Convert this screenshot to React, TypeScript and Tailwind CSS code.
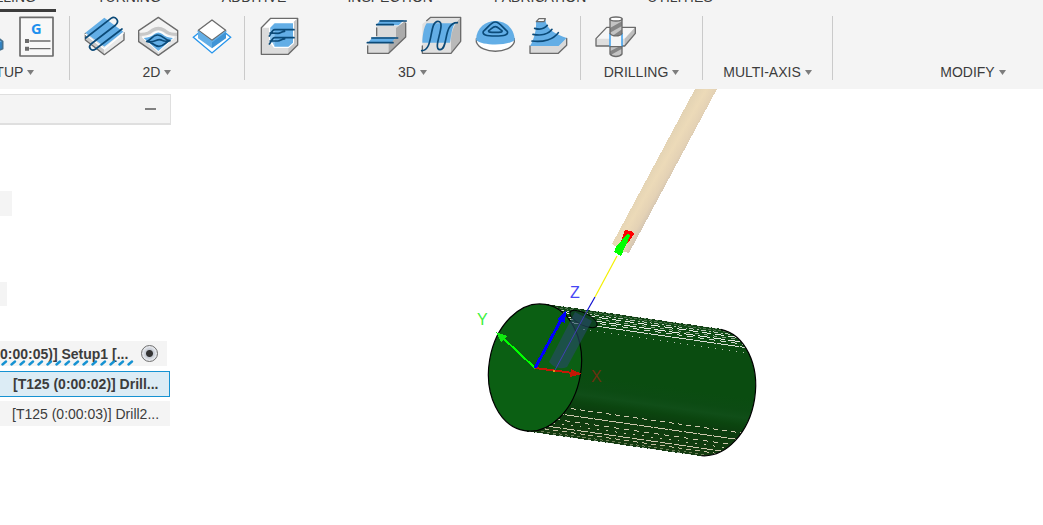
import type { ReactNode } from "react";
import clsx from "clsx";

const NAVY = "#0b4a78";
const BLUE = "#63aee6";
const EDGE = "#6b6b6b";

const tabs = [
  "MILLING",
  "TURNING",
  "ADDITIVE",
  "INSPECTION",
  "FABRICATION",
  "UTILITIES",
];

function Icon({ label, children }: { label: string; children: ReactNode }) {
  return (
    <button type="button" aria-label={label} className="size-10 shrink-0">
      <svg
        viewBox="0 0 120 120"
        className="size-10 overflow-visible"
        fill="none"
        strokeWidth="5"
        strokeLinejoin="round"
        strokeLinecap="round"
      >
        {children}
      </svg>
    </button>
  );
}

function NewSetupIcon() {
  return (
    <Icon label="New setup">
      <path d="M60 60 L100 60 L122 76 L122 98 L98 108 L60 108Z" fill={BLUE} />
      <path d="M98 84 L122 76 L122 98 L98 108Z" fill="#3284c4" />
      <path d="M60 60 L100 60 L122 76 L122 98 L98 108" stroke="#46718f" />
    </Icon>
  );
}

function PostIcon() {
  return (
    <Icon label="Post process">
      <rect x="12" y="4" width="99" height="116" fill="#f8f8f8" stroke={EDGE} />
      <text
        x="61"
        y="54"
        textAnchor="middle"
        fontFamily="'Noto Sans', 'Open Sans', sans-serif"
        fontWeight="700"
        fontSize="44"
        fill="#1e90ee"
      >
        G
      </text>
      <path d="M27 69h12v12h-12z M27 92h12v12h-12z" fill={EDGE} />
      <path d="M42 75h60 M42 98h60" stroke={EDGE} strokeWidth="4" />
    </Icon>
  );
}

function FaceIcon() {
  return (
    <Icon label="Face">
      <path d="M7 50 L64 96 L64 118 L7 72Z" fill="#c9c9c9" />
      <path d="M123 48 L64 96 L64 118 L123 72Z" fill="#e9e9e9" />
      <path d="M7 52 L7 72 L64 116 L123 72 L123 50" stroke={EDGE} strokeWidth="4" />
      <path d="M64 5 L121 47 L64 92 L7 50Z" fill={BLUE} />
      <path d="M7 55 L64 99 L121 51" stroke="#fff" strokeWidth="4" />
      <path
        d="M8 66 L84 7 C96 -1 112 14 98 27 L24 84 C14 93 24 108 38 99 L117 39"
        stroke={NAVY}
      />
    </Icon>
  );
}

function AdaptiveIcon() {
  return (
    <Icon label="2D adaptive clearing">
      <path d="M64 4 L122 44 L122 77 L64 118 L5 77 L5 44Z" fill="#f4f4f4" />
      <path d="M5 46 L18 66 L64 106 L64 118 L5 77Z" fill="#d8d8d8" />
      <path d="M122 46 L110 66 L64 106 L64 118 L122 77Z" fill="#e6e6e6" />
      <path d="M7 50 C24 52 36 46 44 38 Q64 26 84 38 C92 46 104 52 120 50 L120 60 Q92 60 80 48 Q64 38 48 48 Q36 60 7 60Z" fill="#c8c8c8" />
      <path d="M14 64 Q38 62 50 50 Q64 40 78 50 Q90 62 114 64 L64 109Z" fill="#fff" />
      <path d="M20 66 Q42 64 52 54 Q64 45 76 54 Q86 64 108 66 L64 105Z" fill={BLUE} />
      <path
        d="M29 76 C40 76 45 57 62 57 C78 57 84 74 99 74 C86 76 82 91 66 91 C50 91 44 76 29 76Z M29 76 C54 84 60 64 75 73 C84 78 92 76 99 74"
        stroke={NAVY}
      />
      <path d="M64 4 L122 44 L122 77 L64 118 L5 77 L5 44Z" stroke={EDGE} strokeWidth="4" />
    </Icon>
  );
}

function ContourIcon() {
  return (
    <Icon label="2D contour">
      <path d="M63 18 L119 64 L63 111 L7 64Z" fill="#fff" stroke="#2695ec" strokeWidth="4" strokeLinejoin="miter" />
      <path d="M21 42 L63 73 L63 97 L21 67Z" fill={BLUE} />
      <path d="M105 42 L63 73 L63 97 L105 67Z" fill="#3f94d6" />
      <path d="M63 12 L104 43 L63 73 L22 43Z" fill="#fff" stroke={EDGE} strokeWidth="4" />
      <path d="M21 46 L63 77 L105 46" stroke={BLUE} strokeWidth="4" />
    </Icon>
  );
}

function PocketIcon() {
  return (
    <Icon label="Adaptive clearing">
      <path d="M10 35 L38 7 L119 7 L119 87 L91 115 L10 115Z" fill="#dcdcdc" />
      <path d="M10 35 L38 7 L119 7 L105 21 L48 21 L34 35Z" fill="#fff" />
      <path d="M119 7 L119 87 L91 115 L91 94 L107 80 L107 18Z" fill="#c6c6c6" />
      <path d="M33 34 L50 19 L108 19 L108 82 L92 96 L48 96 L33 76Z" fill="#fff" />
      <path d="M36 36 L50 22 L105 22 L105 80 L91 92 L50 92 L45 80 L36 76Z" fill={BLUE} />
      <path d="M36 36 L50 44 L50 92 L45 80 L36 76Z" fill="#8bc4ee" />
      <path
        d="M108 41 L50 41 C42 41 40 53 34 60 M36 51 L60 52 C68 52 70 46 80 46 M108 65 L50 65 C42 65 40 78 34 84 M36 75 L60 75 C68 75 70 69 80 69"
        stroke={NAVY}
      />
      <path d="M10 35 L38 7 L119 7 L119 87 L91 115 L10 115Z" stroke={EDGE} strokeWidth="4" />
    </Icon>
  );
}

function HorizontalIcon() {
  return (
    <Icon label="Horizontal">
      <path d="M5 85 L5 112 L68 112 L119 63 L119 14 L98 30 L32 30 L32 62 L22 68Z" fill="#dadada" />
      <path d="M119 14 L119 63 L68 112 L68 84 L90 66 L90 36Z" fill="#ababab" />
      <path d="M32 36 L32 59 M5 90 L5 112 L68 112 L119 63 L119 22" stroke={EDGE} strokeWidth="4" />
      <path d="M44 12 L114 12 L98 28 L30 28Z M20 64 L90 64 L76 80 L6 80Z" fill={BLUE} />
      <path
        d="M42 15 L121 15 M32 26 L82 26 M17 66 L95 66 M4 80 L81 80"
        stroke={NAVY}
      />
    </Icon>
  );
}

function ParallelIcon() {
  return (
    <Icon label="Parallel">
      <path d="M7 25 L32 4 L122 4 L98 26 L93 112 L7 112Z" fill="#e0e0e0" />
      <path d="M122 4 L122 76 L93 112 L93 70 C94 45 102 24 122 4Z" fill="#b9b9b9" />
      <path d="M20 22 L106 22 C96 32 94 55 90 80 L7 80 C7 60 12 32 20 22Z" fill={BLUE} />
      <path d="M20 14 L32 4 L122 4 L122 76 L93 112 L7 112 L7 90" stroke={EDGE} strokeWidth="4" />
      <path
        d="M5 104 C42 104 26 16 54 16 C82 16 34 101 60 101 C86 101 68 20 112 20"
        stroke={NAVY}
      />
    </Icon>
  );
}

function ScallopIcon() {
  return (
    <Icon label="Scallop">
      <path d="M7 68 L7 78 C20 115 108 115 121 78 L121 68Z" fill="#fff" stroke={EDGE} strokeWidth="4" />
      <path d="M6 72 C8 -4 120 -4 122 72 C104 90 24 90 6 72Z" fill={BLUE} />
      <path
        d="M64 18 C76 18 84 32 100 46 C104 56 92 60 64 60 C36 60 24 56 28 46 C44 32 52 18 64 18Z M64 32 C72 32 76 40 84 44 C86 49 78 49 64 49 C50 49 42 49 44 44 C52 40 56 32 64 32Z"
        stroke={NAVY}
      />
    </Icon>
  );
}

function RampIcon() {
  return (
    <Icon label="Ramp">
      <path d="M6 90 L92 90 L116 67 L116 88 L91 112 L6 112Z" fill="#d9d9d9" />
      <path d="M6 90 L6 112 L91 112 L116 88 L116 67" stroke={EDGE} strokeWidth="4" />
      <path d="M24 14 L52 10 C54 40 82 55 116 66 L92 90 L6 90 C18 70 26 42 24 14Z" fill={BLUE} />
      <path d="M25 17 L33 8 L52 8 L48 17Z" fill="#fff" stroke={EDGE} strokeWidth="4" />
      <path
        d="M20 37 C36 42 50 38 58 28 M15 55 C40 60 62 54 72 40 M12 75 C45 80 78 70 91 50"
        stroke={NAVY}
      />
    </Icon>
  );
}

function DrillIcon() {
  return (
    <Icon label="Drill">
      <path d="M6 68 L38 34 L124 34 L124 52 L92 90 L6 90Z" fill="#dedede" />
      <path d="M6 68 L38 34 L124 34 L92 68Z" fill="#f6f6f6" />
      <path d="M124 34 L124 52 L92 90 L92 68Z" fill="#bebebe" />
      <path d="M6 68 L38 34 L124 34 L124 52 L92 90 L6 90Z" stroke={EDGE} strokeWidth="4" />
      <path d="M47 58 H84 V92 H47Z" fill="#f4f4f4" />
      <path d="M48 52 V92 M84 52 V92" stroke="#2695ec" strokeWidth="4" />
      <path d="M48 8 V52 C54 62 78 62 84 52 V8Z M48 92 V114 C56 124 76 124 84 114 V92Z" fill="#c4c4c4" />
      <path d="M48 36 L84 16 L84 30 L48 50Z M56 59 L84 40 L84 52 L72 59Z M48 106 L74 92 L84 92 L84 98 L50 117Z" fill="#858585" />
      <path d="M48 8 V52 C54 62 78 62 84 52 V8 M48 92 V114 C56 124 76 124 84 114 V92Z" stroke={EDGE} strokeWidth="4" />
      <ellipse cx="66" cy="9" rx="18" ry="6" fill="#fff" stroke={EDGE} strokeWidth="4" />
    </Icon>
  );
}

interface GroupProps {
  label: string;
  className?: string;
  alignEnd?: boolean;
  last?: boolean;
  children?: ReactNode;
}

function ToolGroup({ label, className, alignEnd, last, children }: GroupProps) {
  return (
    <section
      className={clsx(
        "flex h-16 shrink-0 flex-col items-center justify-between px-[13px]",
        !last && "border-r border-[#cacaca]",
        className
      )}
    >
      <div className={clsx("flex h-10 gap-3.5", alignEnd ? "self-end" : "self-start")}>
        {children}
      </div>
      <button
        type="button"
        className="flex items-center gap-1 text-sm leading-4 whitespace-nowrap text-[#3c3c3c]"
      >
        {label}
        <svg viewBox="0 0 7 5" className="h-[5px] w-[7px]">
          <path d="M0 0h7L3.5 5z" fill="#7d7d7d" />
        </svg>
      </button>
    </section>
  );
}

function Ribbon() {
  return (
    <header className="h-[89px] overflow-hidden bg-[#f4f4f4]">
      <nav className="-ml-10 flex h-3 items-end gap-[21px] overflow-hidden">
        {tabs.map((tab, i) => (
          <button
            key={tab}
            type="button"
            className={clsx(
              "shrink-0 border-b-3 px-5 pb-[5px] text-sm leading-[14px] text-[#3c3c3c]",
              i === 0 ? "border-[#3c3c3c]" : "border-transparent"
            )}
          >
            {tab}
          </button>
        ))}
      </nav>
      <div className="mt-1 -ml-[58px] flex">
        <ToolGroup label="SETUP" className="w-32" alignEnd>
          <NewSetupIcon />
          <PostIcon />
        </ToolGroup>
        <ToolGroup label="2D" className="w-[175px]">
          <FaceIcon />
          <AdaptiveIcon />
          <ContourIcon />
        </ToolGroup>
        <ToolGroup label="3D" className="w-[336px]">
          <PocketIcon />
          <span className="w-10" />
          <HorizontalIcon />
          <ParallelIcon />
          <ScallopIcon />
          <RampIcon />
        </ToolGroup>
        <ToolGroup label="DRILLING" className="w-[122px]">
          <DrillIcon />
        </ToolGroup>
        <ToolGroup label="MULTI-AXIS" className="w-[130px]" />
        <ToolGroup label="MODIFY" className="w-[280px]" last />
      </div>
    </header>
  );
}

function BrowserPanel() {
  return (
    <aside className="w-[171px] shrink-0 text-sm leading-4 text-[#3c3c3c]">
      <div className="mt-[5px] flex h-[31px] items-center justify-end border-t border-r border-b-2 border-[#dfdfdf] bg-[#f4f4f4] pr-3.5">
        <button type="button" aria-label="Collapse" className="flex h-4 items-center">
          <span className="h-0.5 w-[11px] bg-[#808080]" />
        </button>
      </div>
      <div className="mt-[66px] h-[25px] w-3 bg-[#f4f4f4]" />
      <div className="mt-[66px] h-6 w-[7px] bg-[#f4f4f4]" />

      <div className="mt-[35px] flex h-[25px] w-[167px] items-center justify-between bg-[#f4f4f4] pr-[9px]">
        <label htmlFor="setup1" className="relative font-bold whitespace-nowrap">
          0:00:05)] Setup1 [...
          <svg className="absolute top-3.5 left-0 h-1.5 w-[134px]">
            <defs>
              <pattern id="hatch" width="9" height="6" patternUnits="userSpaceOnUse">
                <path d="M2.5 4.5 L6 1.5" stroke="#1592d2" strokeWidth="2.4" strokeLinecap="round" />
              </pattern>
            </defs>
            <rect width="134" height="6" fill="url(#hatch)" />
          </svg>
        </label>
        <input
          id="setup1"
          type="radio"
          name="setup"
          defaultChecked
          className="size-[17px] appearance-none rounded-full border border-[#6e6e6e] bg-[radial-gradient(circle,#333_3px,#c5cad3_4px,#e8eaee_7px)]"
        />
      </div>
      <div className="mt-[5px] flex h-[26px] w-[170px] items-center border border-l-0 border-[#1592d2] bg-[#dcecf5] pl-[13px] font-bold whitespace-nowrap">
        [T125 (0:00:02)] Drill...
      </div>
      <div className="mt-1 flex h-[25px] w-[170px] items-center bg-[#f4f4f4] pl-3 whitespace-nowrap">
        [T125 (0:00:03)] Drill2...
      </div>
    </aside>
  );
}

// feature edges along the stock, measured from its centre axis
const stockEdges = [
  { offset: -63, dash: "3 2", color: "#51704f" },
  { offset: -61, dash: "5 3 2 2", color: "#b9c5b6" },
  { offset: -59, dash: "9 4", color: "#e8ebe5" },
  { offset: -57, dash: "4 5", color: "#93a991" },
  { offset: -55, dash: "12 3", color: "#e8ebe5" },
  { offset: -53, dash: "6 5", color: "#d0d9cd" },
  { offset: -50, dash: "22 1", color: "#d6ddd3" },
  { offset: -45, dash: "1 6", color: "#b3c0b0" },
  { offset: 36, dash: "5 4", color: "#cdc7ad" },
  { offset: 43, dash: "14 1", color: "#cdc7ad" },
  { offset: 49, dash: "5 5", color: "#cdc7ad" },
  { offset: 53, dash: "2 7", color: "#cdc7ad" },
  { offset: 57, dash: "12 2", color: "#cdc7ad" },
  { offset: 60, dash: "5 4", color: "#c3bd9f" },
  { offset: 63, dash: "3 3", color: "#6d7f58" },
];

const stockPath =
  "M544.7 304.3 L720.7 329.3 A46 64 9.4 0 1 701.3 455.7 L525.3 430.7 A46 64 9.4 0 0 544.7 304.3Z";

function Viewport() {
  return (
    <svg
      viewBox="171 89 872 436"
      width="872"
      height="436"
      className="shrink-0"
      role="img"
      aria-label="Stock and tool preview"
    >
      <defs>
        <linearGradient id="stock" gradientUnits="userSpaceOnUse" x1="632" y1="317" x2="614" y2="443">
          <stop offset="0" stopColor="#124c18" />
          <stop offset="0.15" stopColor="#0a4c10" />
          <stop offset="0.5" stopColor="#0a4c10" />
          <stop offset="0.6" stopColor="#0c4b13" />
          <stop offset="0.66" stopColor="#104e18" />
          <stop offset="0.72" stopColor="#0b450f" />
          <stop offset="0.78" stopColor="#0b3d0e" />
          <stop offset="1" stopColor="#153c10" />
        </linearGradient>
        <linearGradient id="shank" gradientUnits="userSpaceOnUse" x1="652" y1="165" x2="673" y2="177">
          <stop offset="0" stopColor="#e3d3b4" />
          <stop offset="0.4" stopColor="#ecdab8" />
          <stop offset="0.75" stopColor="#e4d2b5" />
          <stop offset="1" stopColor="#d2c4b2" />
        </linearGradient>
        <clipPath id="stockClip">
          <path d={stockPath} />
        </clipPath>
      </defs>

      <g shapeRendering="crispEdges">
        <path d="M695 89 L717 89 L629 253 L624 252 L612 244Z" fill="url(#shank)" />
        <path d="M625 230 L631 231 L634 234 L628 243 L621 242Z" fill="#f00" />
        <path d="M628 233 L630 236 L621 256 L614 252 L616 247Z" fill="#0f0" />
      </g>

      <path d={stockPath} fill="url(#stock)" />
      <g clipPath="url(#stockClip)" shapeRendering="crispEdges">
        {stockEdges.map((e) => (
          <line
            key={e.offset}
            x1="535"
            y1={367.5 + e.offset}
            x2="760"
            y2={399.6 + e.offset}
            stroke={e.color}
            strokeDasharray={e.dash}
          />
        ))}
      </g>
      <path d="M720.7 329.3 A46 64 9.4 0 1 701.3 455.7" fill="none" stroke="#000" strokeWidth="1.2" />
      <path
        d="M544.7 304.3 L720.7 329.3 M701.3 455.7 L525.3 430.7"
        stroke="#143c14"
        strokeDasharray="4 2"
        shapeRendering="crispEdges"
      />
      <ellipse
        cx="535"
        cy="367.5"
        rx="46"
        ry="64"
        transform="rotate(9.4 535 367.5)"
        fill="#0b5f13"
        stroke="#000"
        strokeWidth="1.2"
      />

      <ellipse
        cx="583.5"
        cy="319"
        rx="15"
        ry="6"
        transform="rotate(27 583.5 319)"
        fill="#0d4320"
        stroke="#000"
      />
      <path d="M575 312 L592 321 L567 367 Q557 371 549 362Z" fill="#264a66" fillOpacity="0.65" />
      <path d="M555 370 L587 311" stroke="#4040b4" />
      <path d="M587 311 L595 297" stroke="#1010d0" strokeWidth="1.2" />
      <path d="M595 297 L617 256" stroke="#f4f000" strokeWidth="1.2" />

      <g shapeRendering="crispEdges">
        <path d="M535 368 L573 373" stroke="#c41806" strokeWidth="2" />
        <path d="M571 369 L582 374 L570 377Z" fill="#c41806" />
        <path d="M535 368 L503 338" stroke="#0f0" strokeWidth="2" />
        <path d="M496 332 L507 336 L501 342Z" fill="#10ea10" />
        <path d="M535 368 L561 320" stroke="#00f" strokeWidth="3" />
        <path d="M566 311 L565 323 L557 319Z" fill="#00f" />
        <rect x="553" y="370" width="2" height="2" fill="#e09018" />
      </g>

      <g fontFamily="'Liberation Sans', Arial, sans-serif" fontSize="16">
        <text x="570" y="298" fill="#4646f4">Z</text>
        <text x="477" y="325" fill="#3df03d">Y</text>
        <text x="591" y="382" fill="#6c3010">X</text>
      </g>
    </svg>
  );
}

export default function App() {
  return (
    <div className="min-h-screen overflow-hidden bg-white font-['Liberation_Sans',Arial,sans-serif]">
      <Ribbon />
      <main className="flex">
        <BrowserPanel />
        <Viewport />
      </main>
    </div>
  );
}
